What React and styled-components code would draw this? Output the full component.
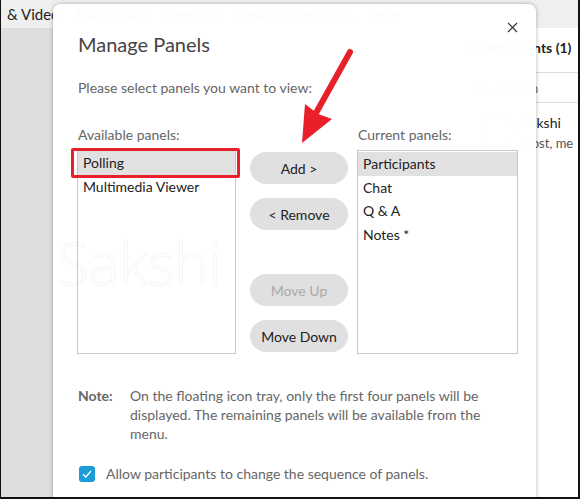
import React from "react";
import styled, { createGlobalStyle } from "styled-components";

const GlobalStyle = createGlobalStyle`
  html, body {
    margin: 0;
    padding: 0;
    background: #fff;
  }
  * {
    box-sizing: border-box;
  }
`;

const FONT = `Lato, "Open Sans", "Liberation Sans", sans-serif`;

// 전체 화면 (스크린샷 테두리 포함)
const Screen = styled.div`
  position: relative;
  width: 580px;
  height: 499px;
  overflow: hidden;
  border-left: 1px solid #111;
  border-right: 2px solid #111;
  border-bottom: 2px solid #111;
  font-family: ${FONT};
`;

// 다이얼로그 뒤의 앱 화면
const AppLayer = styled.div`
  display: grid;
  grid-template-rows: 28px 1fr;
  height: 100%;
`;

const TopBar = styled.div`
  display: flex;
  align-items: center;
  gap: 16px;
  padding-left: 6px;
  background: #efefef;
  font-size: 15px;
  color: #222;
  white-space: nowrap;
`;

const Body = styled.div`
  display: flex;
  min-height: 0;
`;

const Stage = styled.div`
  flex: 1;
  background: #dedede;
`;

const ParticipantsPanel = styled.div`
  width: 112px;
  background: #fff;
  display: flex;
  flex-direction: column;
`;

const PanelHeader = styled.div`
  height: 45px;
  display: flex;
  align-items: center;
  gap: 6px;
  padding: 0 0 6px 2px;
  border-bottom: 1px solid #ddd;
  font-size: 14px;
  font-weight: 700;
  color: #222;
  white-space: nowrap;
`;

const BackMark = styled.span`
  font-weight: 400;
  color: #888;
`;

const SearchRow = styled.div`
  height: 30px;
  display: flex;
  align-items: center;
  gap: 6px;
  padding-left: 12px;
  border-bottom: 1px solid #ddd;
  font-size: 14px;
  color: #777;
`;

const PersonRow = styled.div`
  display: flex;
  gap: 8px;
  padding: 10px 0 0 14px;
  white-space: nowrap;
`;

const Avatar = styled.div`
  width: 34px;
  height: 34px;
  flex: none;
  border-radius: 50%;
  border: 1px solid #bbb;
`;

const PersonText = styled.div`
  display: flex;
  flex-direction: column;
  font-size: 14px;
  line-height: 20px;
  color: #222;
`;

const PersonRole = styled.span`
  font-size: 13px;
  color: #555;
`;

// 패널 관리 다이얼로그
const Dialog = styled.div`
  position: absolute;
  z-index: 1;
  left: 52px;
  top: 4px;
  width: 483px;
  bottom: -20px;
  padding: 26px 25px 0;
  background: rgba(255, 255, 255, 0.985);
  border-radius: 8px 8px 0 0;
  box-shadow: 0 0 4px rgba(0, 0, 0, 0.3);
  color: #666;
`;

const CloseButton = styled.button`
  position: absolute;
  top: 16px;
  right: 17px;
  width: 14px;
  height: 14px;
  padding: 0;
  border: none;
  background: none;
  display: flex;
  align-items: center;
  justify-content: center;
`;

const Title = styled.h2`
  margin: 0;
  font-size: 20px;
  line-height: 28px;
  font-weight: 400;
  color: #444;
`;

const Subtitle = styled.p`
  margin: 20px 0 0;
  font-size: 14px;
  line-height: 20px;
`;

const PanelsGrid = styled.div`
  margin: 27px 0 0 -1px;
  display: grid;
  grid-template-columns: 159px 121px 161px;
  grid-template-rows: 20px auto;
  row-gap: 4px;
  grid-template-areas:
    "availLabel . currentLabel"
    "availList buttons currentList";
`;

const ColumnLabel = styled.div`
  grid-area: ${(p) => p.$area};
  padding-left: 1px;
  font-size: 14px;
  line-height: 20px;
  white-space: nowrap;
`;

const ListBox = styled.div`
  grid-area: ${(p) => p.$area};
  height: ${(p) => (p.$top ? 204 : 205)}px;
  margin-top: ${(p) => p.$top || 0}px;
  border: 1px solid #c8c8c8;
  background: #fff;
  padding-top: 1px;
`;

const ListItem = styled.div`
  position: relative;
  height: 23.5px;
  line-height: 23.5px;
  padding-left: 5px;
  font-size: 14px;
  color: #222;
  background: ${(p) => (p.$selected ? "#e1e1e1" : "transparent")};
  white-space: nowrap;

  ${(p) =>
    p.$marked &&
    `
    &::after {
      content: "";
      position: absolute;
      left: -7px;
      right: -5px;
      top: -3px;
      bottom: -3px;
      border: 3px solid #e8202a;
      border-radius: 2px;
    }
  `}
`;

const ButtonColumn = styled.div`
  grid-area: buttons;
  display: flex;
  flex-direction: column;
  padding: 3px 9px 0 14px;
`;

const PillButton = styled.button`
  height: 32px;
  margin-top: ${(p) => p.$gap || 0}px;
  border: none;
  border-radius: 16px;
  background: #e0e0e0;
  font-family: ${FONT};
  font-size: 14px;
  color: ${(p) => (p.disabled ? "#aaa" : "#222")};
  padding: 0;
`;

const Note = styled.div`
  margin-top: 32px;
  display: grid;
  grid-template-columns: 52px 358px;
  font-size: 14px;
  line-height: 19px;
`;

const NoteLabel = styled.span`
  font-weight: 700;
  color: #666;
`;

const CheckRow = styled.label`
  margin-top: 21px;
  display: flex;
  align-items: center;
  gap: 11px;
  padding-left: 1px;
  font-size: 14px;
  line-height: 20px;
`;

const CheckBox = styled.span`
  width: 16px;
  height: 16px;
  border-radius: 3px;
  background: #1b9bd8;
  display: flex;
  align-items: center;
  justify-content: center;
`;

const Watermark = styled.div`
  position: absolute;
  left: 4px;
  top: 224px;
  font-family: "Open Sans", sans-serif;
  font-weight: 300;
  font-size: 58px;
  line-height: 70px;
  color: transparent;
  -webkit-text-stroke: 1px rgba(0, 0, 0, 0.045);
  pointer-events: none;
`;

// 주석용 빨간 화살표
const ArrowLayer = styled.svg`
  position: absolute;
  z-index: 2;
  left: -1px;
  top: 0;
  pointer-events: none;
`;

const menuItems = ["& Video", "Participant", "Meeting", "Breakout Sessions", "Help"];
const available = ["Polling", "Multimedia Viewer"];
const current = ["Participants", "Chat", "Q & A", "Notes *"];

export default function App() {
  return (
    <>
      <GlobalStyle />
      <Screen>
        <AppLayer>
          <TopBar>
            {menuItems.map((m) => (
              <span key={m}>{m}</span>
            ))}
          </TopBar>
          <Body>
            <Stage />
            <ParticipantsPanel>
              <PanelHeader>
                <BackMark>‹</BackMark>
                Participants (1)
              </PanelHeader>
              <SearchRow>
                <svg width="13" height="13" viewBox="0 0 13 13" fill="none" stroke="#888" strokeWidth="1.3">
                  <circle cx="5.5" cy="5.5" r="4.3" />
                  <path d="M8.7 8.7L12 12" />
                </svg>
                Search
              </SearchRow>
              <PersonRow>
                <Avatar />
                <PersonText>
                  Sakshi
                  <PersonRole>Host, me</PersonRole>
                </PersonText>
              </PersonRow>
            </ParticipantsPanel>
          </Body>
        </AppLayer>

        <Dialog>
          <CloseButton aria-label="Close">
            <svg width="11" height="11" viewBox="0 0 11 11" stroke="#333" strokeWidth="1.2">
              <path d="M1 1L10 10M10 1L1 10" />
            </svg>
          </CloseButton>
          <Title>Manage Panels</Title>
          <Subtitle>Please select panels you want to view:</Subtitle>

          <PanelsGrid>
            <ColumnLabel $area="availLabel">Available panels:</ColumnLabel>
            <ColumnLabel $area="currentLabel">Current panels:</ColumnLabel>
            <ListBox $area="availList">
              {available.map((p, i) => (
                <ListItem key={p} $selected={i === 0} $marked={i === 0}>
                  {p}
                </ListItem>
              ))}
            </ListBox>
            <ButtonColumn>
              <PillButton>Add &gt;</PillButton>
              <PillButton $gap={14}>&lt; Remove</PillButton>
              <PillButton $gap={44} disabled>
                Move Up
              </PillButton>
              <PillButton $gap={14}>Move Down</PillButton>
            </ButtonColumn>
            <ListBox $area="currentList" $top={1}>
              {current.map((p, i) => (
                <ListItem key={p} $selected={i === 0}>
                  {p}
                </ListItem>
              ))}
            </ListBox>
          </PanelsGrid>

          <Note>
            <NoteLabel>Note:</NoteLabel>
            <span>
              On the floating icon tray, only the first four panels will be displayed. The
              remaining panels will be available from the menu.
            </span>
          </Note>

          <CheckRow>
            <CheckBox>
              <svg width="10" height="8" viewBox="0 0 10 8" fill="none" stroke="#fff" strokeWidth="1.4">
                <path d="M1 4.2L3.8 7L9 1" />
              </svg>
            </CheckBox>
            Allow participants to change the sequence of panels.
          </CheckRow>

          <Watermark>Sakshi</Watermark>
        </Dialog>

        <ArrowLayer width="580" height="499" viewBox="0 0 580 499">
          <line x1="350" y1="52" x2="316" y2="113" stroke="#e8202a" strokeWidth="6" strokeLinecap="round" />
          <polygon points="302,143 305,104 318,114 332,119" fill="#e8202a" />
        </ArrowLayer>
      </Screen>
    </>
  );
}
